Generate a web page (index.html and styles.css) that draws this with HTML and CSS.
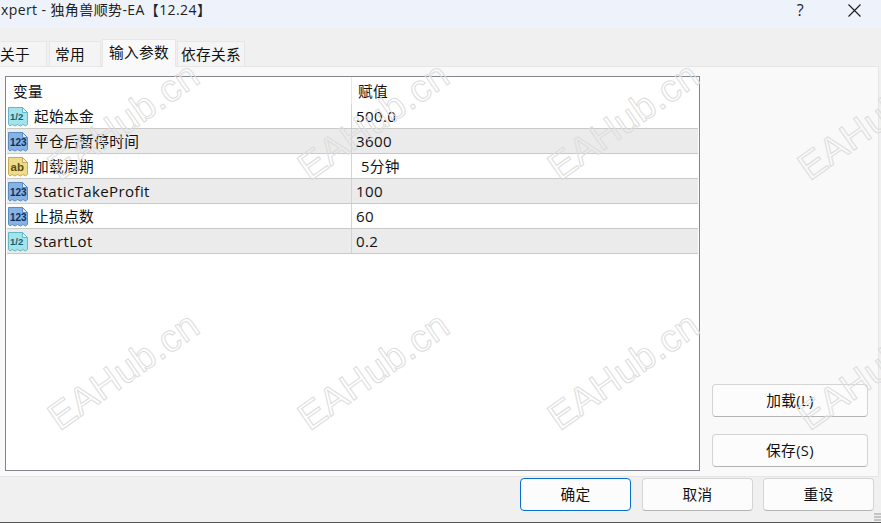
FILE: index.html
```html
<!DOCTYPE html>
<html lang="zh-CN">
<head>
<meta charset="utf-8">
<title>Expert</title>
<link rel="stylesheet" href="styles.css">
</head>
<body>
<div class="window">
  <header class="titlebar">
    <span class="title">xpert - 独角兽顺势-EA【12.24】</span>
    <span class="help">?</span>
    <svg class="close" width="13" height="13" viewBox="0 0 13 13"><path d="M.5.5l12 12M12.500.5l-12 12" fill="none" stroke="#1a1a1a" stroke-width="1.1"/></svg>
  </header>
  <nav class="tabs">
    <span class="tab tab-first">关于</span>
    <span class="tab tab-second">常用</span>
    <span class="tab tab-active">输入参数</span>
    <span class="tab tab-last">依存关系</span>
  </nav>
  <main class="panel">
    <section class="table">
      <div class="row head"><span class="name">变量</span><span class="value">赋值</span></div>
      <div class="row">
        <span class="name"><svg class="icon" viewBox="0 0 22 21"><path class="doc teal" d="M1.500 1.500h14l5 5v12l-2 1.500-2.500-1.500-2.500 1.500-3-1.500-2.500 1.500-3-1.500-2 1.500-1.500-1.500z"/><path class="fold teal" d="M15.500 1.500v5h5z"/><text class="icon-text half" x="3" y="14">1/2</text></svg>起始本金</span>
        <span class="value latin">500.0</span>
      </div>
      <div class="row alt">
        <span class="name"><svg class="icon" viewBox="0 0 22 21"><path class="doc blue" d="M1.500 1.500h14l5 5v12l-2 1.500-2.500-1.500-2.500 1.500-3-1.500-2.500 1.500-3-1.500-2 1.500-1.500-1.500z"/><path class="fold blue" d="M15.500 1.500v5h5z"/><text class="icon-text num" x="3" y="15">123</text></svg>平仓后暂停时间</span>
        <span class="value latin">3600</span>
      </div>
      <div class="row">
        <span class="name"><svg class="icon" viewBox="0 0 22 21"><path class="doc gold" d="M1.500 1.500h14l5 5v12l-2 1.500-2.500-1.500-2.500 1.500-3-1.500-2.500 1.500-3-1.500-2 1.500-1.500-1.500z"/><path class="fold gold" d="M15.500 1.500v5h5z"/><text class="icon-text abc" x="3.500" y="14.500">ab</text></svg>加载周期</span>
        <span class="value value-pad">5分钟</span>
      </div>
      <div class="row alt">
        <span class="name"><svg class="icon" viewBox="0 0 22 21"><path class="doc blue" d="M1.500 1.500h14l5 5v12l-2 1.500-2.500-1.500-2.500 1.500-3-1.500-2.500 1.500-3-1.500-2 1.500-1.500-1.500z"/><path class="fold blue" d="M15.500 1.500v5h5z"/><text class="icon-text num" x="3" y="15">123</text></svg><span class="latin">StaticTakeProfit</span></span>
        <span class="value latin">100</span>
      </div>
      <div class="row">
        <span class="name"><svg class="icon" viewBox="0 0 22 21"><path class="doc blue" d="M1.500 1.500h14l5 5v12l-2 1.500-2.500-1.500-2.500 1.500-3-1.500-2.500 1.500-3-1.500-2 1.500-1.500-1.500z"/><path class="fold blue" d="M15.500 1.500v5h5z"/><text class="icon-text num" x="3" y="15">123</text></svg>止损点数</span>
        <span class="value latin">60</span>
      </div>
      <div class="row alt">
        <span class="name"><svg class="icon" viewBox="0 0 22 21"><path class="doc teal" d="M1.500 1.500h14l5 5v12l-2 1.500-2.500-1.500-2.500 1.500-3-1.500-2.500 1.500-3-1.500-2 1.500-1.500-1.500z"/><path class="fold teal" d="M15.500 1.500v5h5z"/><text class="icon-text half" x="3" y="14">1/2</text></svg><span class="latin">StartLot</span></span>
        <span class="value latin">0.2</span>
      </div>
    </section>
    <aside class="side">
      <button class="btn side-btn">加载(L)</button>
      <button class="btn side-btn">保存(S)</button>
    </aside>
  </main>
  <footer class="footer">
    <button class="btn foot-btn default">确定</button>
    <button class="btn foot-btn">取消</button>
    <button class="btn foot-btn">重设</button>
  </footer>
  <div class="marks" aria-hidden="true">
    <span class="mark">EAHub.cn</span><span class="mark">EAHub.cn</span><span class="mark">EAHub.cn</span><span class="mark">EAHub.cn</span>
    <span class="mark">EAHub.cn</span><span class="mark">EAHub.cn</span><span class="mark">EAHub.cn</span><span class="mark">EAHub.cn</span>
  </div>
  <div class="grip"></div>
</div>
</body>
</html>
```

FILE: styles.css
```css
* { box-sizing: border-box; }
html, body { margin: 0; padding: 0; }
body {
  width: 881px;
  height: 523px;
  overflow: hidden;
  font-family: "Open Sans", "Noto Sans CJK SC", sans-serif;
  font-size: 14.7px;
  letter-spacing: 0.35px;
  color: #111;
  background: #f0f0f0;
}
.window {
  position: relative;
  width: 881px;
  height: 523px;
  overflow: hidden;
  display: flex;
  flex-direction: column;
  border-bottom: 1px solid #555;
}
.titlebar {
  height: 28px;
  flex: none;
  background: #eef2fb;
  display: flex;
  align-items: flex-start;
  padding: 0 20px 0 1px;
}
.title { line-height: 20px; font-size: 14px; letter-spacing: 0.4px; color: #222; flex: 1; white-space: nowrap; }
.help { line-height: 20px; font-size: 16px; margin-right: 44px; color: #222; }
.close { margin-top: 4px; }
.tabs {
  height: 39px;
  flex: none;
  display: flex;
  align-items: flex-end;
  position: relative;
  z-index: 1;
  margin-bottom: -1px;
}
.tab {
  height: 25px;
  margin-bottom: 1px;
  background: #f4f4f4;
  border: 1px solid #e6e6e6;
  border-bottom: 0;
  line-height: 24px;
  white-space: nowrap;
}
.tab-first { width: 47px; margin-right: 2px; border-left: 0; }
.tab-second { width: 52px; margin-right: 1px; padding-left: 5px; }
.tab-active { width: 74px; height: 28px; margin-bottom: 0; background: #f9f9f9; line-height: 25px; padding: 0 0 3px 6px; }
.tab-last { width: 68px; margin-left: 1px; padding-left: 3px; }
.panel {
  flex: none;
  width: 879px;
  height: 411px;
  background: #f9f9f9;
  border: 1px solid #e6e6e6;
  border-left: 0;
  display: flex;
  padding: 9px 0 5px 5px;
}
.table {
  width: 695px;
  height: 395px;
  background: #fff;
  border: 1px solid #83868f;
  padding: 0 1px;
  flex: none;
}
.row {
  display: flex;
  height: 25px;
  line-height: 24px;
  border-bottom: 1px solid #c9c9c9;
}
.row.alt { background: #ebebeb; }
.head { height: 27px; border-bottom: 0; line-height: 29px; }
.name {
  width: 345px;
  flex: none;
  height: 100%;
  display: flex;
  align-items: center;
  border-right: 1px solid #d4d4d4;
  padding-left: 0;
  white-space: nowrap;
}
.value { padding-left: 4px; }
.value-pad { padding-left: 9px; }
.latin { font-size: 15.1px; }
.head .name { padding: 1px 0 0 6px; border-right-color: #e8e8e8; }
.head .value { padding-left: 6px; }
.icon { width: 22px; height: 21px; margin-right: 5px; flex: none; }
.doc { stroke-width: 1; }
.doc.teal { fill: #a4e3ea; stroke: #62b8c8; }
.doc.blue { fill: #86b3e3; stroke: #5a8cc4; }
.doc.gold { fill: #ecdc8c; stroke: #c4ad55; }
.fold.teal { fill: #e4f8fa; stroke: #62b8c8; }
.fold.blue { fill: #dcebf9; stroke: #5a8cc4; }
.fold.gold { fill: #faf4cf; stroke: #c4ad55; }
.icon-text { font-family: "Liberation Sans", sans-serif; font-weight: 700; letter-spacing: 0; }
.half { font-size: 9.5px; fill: #14606e; }
.num { font-size: 10px; fill: #0d2f5e; }
.abc { font-size: 11.500px; fill: #5c4c10; }
.side {
  flex: 1;
  display: flex;
  flex-direction: column;
  justify-content: flex-end;
  align-items: flex-start;
  gap: 17px;
  padding: 0 0 4px 12px;
}
.btn {
  font: inherit;
  letter-spacing: inherit;
  color: #111;
  background: #fcfcfc;
  border: 1px solid #d4d4d4;
  border-bottom-color: #b4b4b4;
  border-radius: 4px;
  padding: 0 0 2px;
}
.side-btn { width: 156px; height: 33px; }
.footer {
  flex: 1;
  display: flex;
  justify-content: flex-end;
  gap: 10px;
  padding: 1px 7px 0 0;
  align-items: flex-start;
}
.foot-btn { width: 111px; height: 33px; }
.default { border-color: #0a6fcb; margin-right: 1px; }
.marks {
  position: absolute;
  left: 0;
  top: 0;
  width: 1100px;
  display: grid;
  grid-template-columns: repeat(4, 250px);
  grid-auto-rows: 250px;
  padding: 146px 0 0 64px;
  pointer-events: none;
}
.mark {
  display: block;
  width: 200px;
  height: 42px;
  line-height: 42px;
  font-family: "Liberation Sans", sans-serif;
  font-size: 38px;
  letter-spacing: 0.4px;
  color: transparent;
  -webkit-text-stroke: 1px #dcdcdc;
  transform: rotate(-35deg);
  transform-origin: 0 100%;
  white-space: nowrap;
}
.grip {
  position: absolute;
  right: 0;
  bottom: 0;
  width: 7px;
  height: 9px;
  background-image: linear-gradient(#c4c4c4 2px, transparent 2px);
  background-size: 3px 3px;
}
```
